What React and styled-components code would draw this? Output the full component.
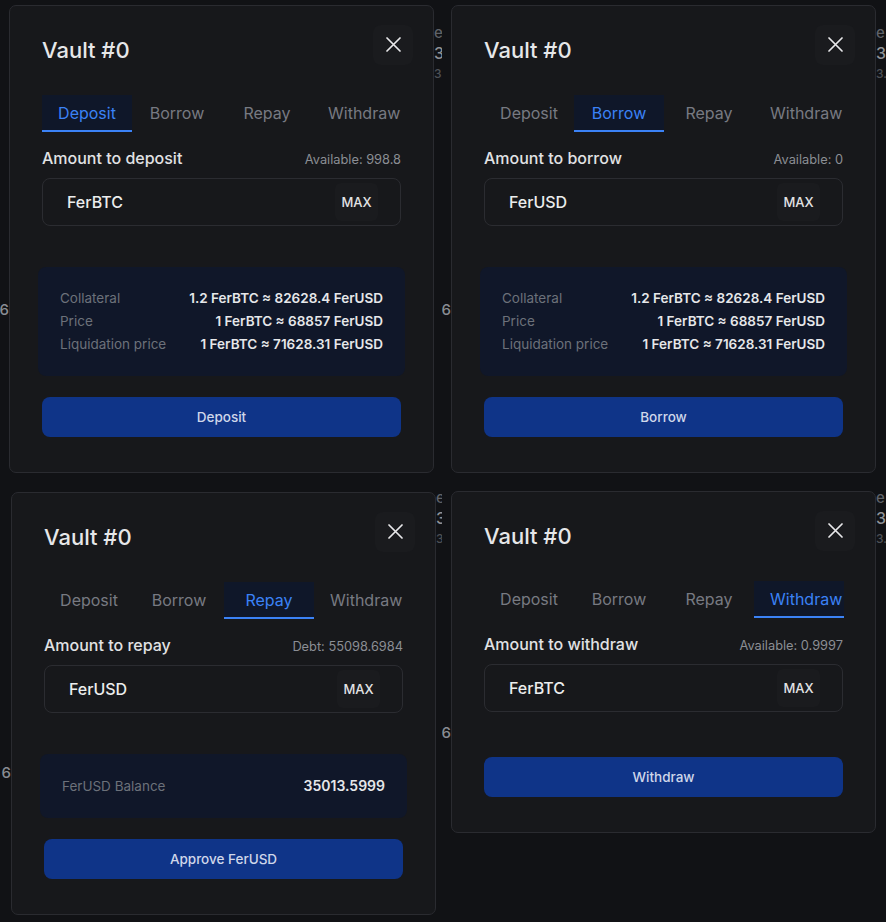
import React from "react";
import styled, { createGlobalStyle } from "styled-components";

const GlobalStyle = createGlobalStyle`
  html, body {
    margin: 0;
    padding: 0;
    background: #0d0e10;
  }
  body {
    font-family: Inter, "Noto Sans", "Liberation Sans", sans-serif;
    -webkit-font-smoothing: antialiased;
  }
`;

const Collage = styled.div`
  display: grid;
  grid-template-columns: 442px 444px;
  grid-template-rows: 481px 441px;
  width: 886px;
  height: 922px;
  overflow: hidden;
`;

const Shot = styled.div`
  display: flex;
  align-items: flex-start;
  background: #111215;
  overflow: hidden;
`;

const Edge = styled.div`
  flex: none;
  width: ${(p) => p.$w}px;
  padding-top: ${(p) => p.$top}px;
  display: flex;
  flex-direction: column;
  align-items: ${(p) => (p.$side === "left" ? "flex-end" : "flex-start")};
  overflow: hidden;
  white-space: nowrap;
`;

const Ghost = styled.span`
  display: block;
  font-size: ${(p) => p.$size || 15}px;
  line-height: ${(p) => p.$lh || 20}px;
  color: ${(p) => p.$color || "#8c8f95"};
  font-weight: 500;
`;

const Modal = styled.section`
  position: relative;
  flex: none;
  width: 425px;
  box-sizing: border-box;
  margin-top: ${(p) => p.$top}px;
  padding: 30px 32px 35px;
  background: #17181b;
  border: 1px solid #2a2b30;
  border-radius: 7px;
`;

const Title = styled.h2`
  margin: 0;
  font-size: 22px;
  line-height: 28px;
  font-weight: 500;
  color: #e6e7e9;
`;

const CloseButton = styled.button`
  position: absolute;
  top: 19px;
  right: 20px;
  width: 40px;
  height: 40px;
  display: flex;
  align-items: center;
  justify-content: center;
  padding: 0 0 2px;
  border: none;
  border-radius: 8px;
  background: #1a1b1e;
  cursor: pointer;
`;

const Tabs = styled.div`
  display: flex;
  margin-top: 31px;
`;

const Tab = styled.button`
  flex: none;
  width: 90px;
  height: 37px;
  box-sizing: border-box;
  padding: 0 16px;
  border: none;
  border-bottom: 2px solid ${(p) => (p.$active ? "#3b82f6" : "transparent")};
  background: ${(p) => (p.$active ? "#0f1729" : "transparent")};
  color: ${(p) => (p.$active ? "#3b82f6" : "#777a82")};
  font-family: inherit;
  font-size: 16px;
  text-align: center;
  white-space: nowrap;
  cursor: pointer;
`;

const LabelRow = styled.div`
  display: flex;
  justify-content: space-between;
  align-items: baseline;
  margin-top: 16px;
  line-height: 20px;
`;

const Label = styled.span`
  font-size: 16px;
  font-weight: 500;
  color: #e1e2e4;
`;

const Hint = styled.span`
  font-size: 12.8px;
  color: #8b8e94;
`;

const InputBox = styled.div`
  display: flex;
  align-items: center;
  justify-content: space-between;
  height: 48px;
  box-sizing: border-box;
  margin-top: 8px;
  padding: 0 22px 0 24px;
  border: 1px solid #2b2c31;
  border-radius: 8px;
`;

const Token = styled.span`
  font-size: 16px;
  font-weight: 500;
  color: #eceded;
`;

const MaxButton = styled.button`
  width: 43px;
  height: 38px;
  padding: 0;
  border: none;
  border-radius: 6px;
  background: #1a1b1e;
  color: #e2e3e5;
  font-family: inherit;
  font-size: 13px;
  font-weight: 500;
  cursor: pointer;
`;

const Summary = styled.div`
  margin: 41px -4px 0;
  padding: 20px 22px;
  background: #101729;
  border-radius: 8px;
`;

const SummaryRow = styled.div`
  display: flex;
  justify-content: space-between;
  align-items: baseline;
  line-height: ${(p) => (p.$tall ? 24 : 23)}px;
`;

const SummaryLabel = styled.span`
  font-size: 13.5px;
  color: #6c717a;
`;

const SummaryValue = styled.span`
  font-size: ${(p) => (p.$big ? 14 : 13.5)}px;
  font-weight: 600;
  color: #e6e7e9;
`;

const Action = styled.button`
  display: block;
  width: 100%;
  height: 40px;
  margin-top: ${(p) => (p.$afterSummary ? 21 : 45)}px;
  border: none;
  border-radius: 8px;
  background: #0f3488;
  color: #cfd7ea;
  font-family: inherit;
  font-size: 13.5px;
  font-weight: 500;
  cursor: pointer;
`;

const CloseIcon = () => (
  <svg width="15" height="15" viewBox="0 0 15 15" fill="none">
    <path
      d="M1 1 L14 14 M14 1 L1 14"
      stroke="#e8e8ea"
      strokeWidth="1.7"
      strokeLinecap="round"
    />
  </svg>
);

const TABS = ["Deposit", "Borrow", "Repay", "Withdraw"];

const vaultRows = [
  ["Collateral", "1.2 FerBTC ≈ 82628.4 FerUSD"],
  ["Price", "1 FerBTC ≈ 68857 FerUSD"],
  ["Liquidation price", "1 FerBTC ≈ 71628.31 FerUSD"],
];

const shots = [
  {
    active: "Deposit",
    label: "Amount to deposit",
    hint: "Available: 998.8",
    token: "FerBTC",
    rows: vaultRows,
    action: "Deposit",
    left: 9,
    right: 8,
    top: 5,
    six: 300,
    ghostTop: 23,
  },
  {
    active: "Borrow",
    label: "Amount to borrow",
    hint: "Available: 0",
    token: "FerUSD",
    rows: vaultRows,
    action: "Borrow",
    left: 9,
    right: 10,
    top: 5,
    six: 300,
    ghostTop: 23,
  },
  {
    active: "Repay",
    label: "Amount to repay",
    hint: "Debt: 55098.6984",
    token: "FerUSD",
    rows: [["FerUSD Balance", "35013.5999"]],
    balance: true,
    action: "Approve FerUSD",
    left: 11,
    right: 6,
    top: 11,
    six: 282,
    ghostTop: 7,
  },
  {
    active: "Withdraw",
    label: "Amount to withdraw",
    hint: "Available: 0.9997",
    token: "FerBTC",
    rows: null,
    action: "Withdraw",
    left: 9,
    right: 10,
    top: 10,
    six: 242,
    ghostTop: 7,
  },
];

const VaultModal = ({ shot }) => (
  <Modal $top={shot.top}>
    <Title>Vault #0</Title>
    <CloseButton aria-label="Close">
      <CloseIcon />
    </CloseButton>
    <Tabs>
      {TABS.map((t) => (
        <Tab key={t} $active={t === shot.active}>
          {t}
        </Tab>
      ))}
    </Tabs>
    <LabelRow>
      <Label>{shot.label}</Label>
      <Hint>{shot.hint}</Hint>
    </LabelRow>
    <InputBox>
      <Token>{shot.token}</Token>
      <MaxButton>MAX</MaxButton>
    </InputBox>
    {shot.rows && (
      <Summary>
        {shot.rows.map(([k, v]) => (
          <SummaryRow key={k} $tall={shot.balance}>
            <SummaryLabel>{k}</SummaryLabel>
            <SummaryValue $big={shot.balance}>{v}</SummaryValue>
          </SummaryRow>
        ))}
      </Summary>
    )}
    <Action $afterSummary={!!shot.rows}>{shot.action}</Action>
  </Modal>
);

const App = () => (
  <>
    <GlobalStyle />
    <Collage>
      {shots.map((shot) => (
        <Shot key={shot.active}>
          <Edge $w={shot.left} $top={shot.six} $side="left">
            <Ghost $size={15} $color="#8a8d93">6</Ghost>
          </Edge>
          <VaultModal shot={shot} />
          <Edge $w={shot.right} $top={shot.ghostTop}>
            <Ghost $size={15} $color="#5f6268">e</Ghost>
            <Ghost $size={16} $color="#8e9196">3</Ghost>
            <Ghost $size={12} $color="#4d5056" $lh={22}>3.</Ghost>
          </Edge>
        </Shot>
      ))}
    </Collage>
  </>
);

export default App;
